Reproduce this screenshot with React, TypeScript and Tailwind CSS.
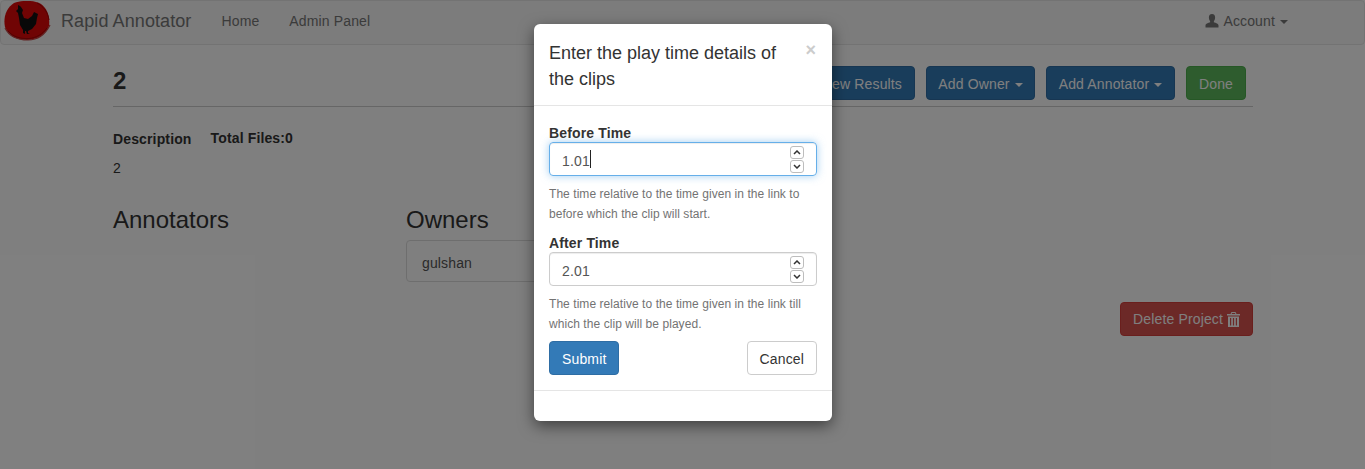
const sans = { fontFamily: '"Liberation Sans", Arial, sans-serif' }

function Caret() {
  return (
    <span className="ml-[5px] inline-block h-0 w-0 border-x-4 border-t-4 border-x-transparent border-t-current align-middle" />
  )
}

function Logo() {
  return (
    <svg width="50" height="42" viewBox="0 0 50 42" className="absolute left-0 top-0">
      <path
        d="M13 2 C21 -1 33 -1 40 3 C47 8 49 17 48 25 C45 34 35 39 26 39 C16 39 7 35 4 26 C2 17 5 7 13 2Z"
        fill="#e00808"
      />
      {/* brush marks round the rim */}
      <path d="M4 27 C8 35 17 39 27 39 C36 39 44 34 49 24" fill="none" stroke="#c04848" strokeWidth="1.2" />
      <path d="M7 30 C12 36 20 38 28 37.5 C35 37 42 33 46 27" fill="none" stroke="#a80404" strokeWidth="1" />
      <path d="M36 2 C42 5 47 11 48 19" fill="none" stroke="#a80404" strokeWidth="1" />
      <path
        d="M17 4 L19 5 L20 6 L22 9 L21 12 L23 17 L27 18 L31 15 L33 11 L37 13 L36 17 L35 23 L31 28 L27 30 L27 32 L29 33 L26 33 L25 30 L24 30 L24 33 L22 32 L22 29 L19 24 L18 17 L17 12 L15 10 L17 8Z"
        fill="#111"
      />
    </svg>
  )
}

function UserIcon() {
  return (
    <svg width="14" height="14" viewBox="0 0 14 14" fill="currentColor">
      <path d="M7 0 C9.2 0 10.2 1.7 10.1 3.7 C10 5.2 9.6 6.2 8.9 7.1 L8.9 8.2 C10.6 9 13.5 9.5 13.5 11.5 L13.5 13.6 L0.5 13.6 L0.5 11.5 C0.5 9.5 3.4 9 5.1 8.2 L5.1 7.1 C4.4 6.2 4 5.2 3.9 3.7 C3.8 1.7 4.8 0 7 0Z" />
    </svg>
  )
}

function TrashIcon() {
  return (
    <svg width="13" height="15" viewBox="0 0 13 15" fill="currentColor">
      <path d="M4.5 0 H8.5 L9.5 2 H13 V3.5 H0 V2 H3.5Z M5 1 L4.7 2 H8.3 L8 1Z" fillRule="evenodd" />
      <path
        d="M1 4.5 H12 V15 H1Z M3 6 V13.5 H4.2 V6Z M5.9 6 V13.5 H7.1 V6Z M8.8 6 V13.5 H10 V6Z"
        fillRule="evenodd"
      />
    </svg>
  )
}

function Spinner() {
  return (
    <div className="flex h-[27px] w-[14px] flex-col gap-px text-[#333]">
      <div className="flex h-[13px] items-center justify-center rounded-[3px] border border-[#bdbdbd] bg-white">
        <svg width="8" height="5" viewBox="0 0 8 5" fill="none" stroke="currentColor" strokeWidth="1.5">
          <path d="M1 4 L4 1 L7 4" />
        </svg>
      </div>
      <div className="flex h-[13px] items-center justify-center rounded-[3px] border border-[#bdbdbd] bg-white">
        <svg width="8" height="5" viewBox="0 0 8 5" fill="none" stroke="currentColor" strokeWidth="1.5">
          <path d="M1 1 L4 4 L7 1" />
        </svg>
      </div>
    </div>
  )
}

function TimeField({
  label,
  value,
  focused,
  help,
}: {
  label: string
  value: string
  focused?: boolean
  help: string[]
}) {
  return (
    <div>
      <div className="-mb-px h-5 text-sm font-bold leading-5 text-[#333]">{label}</div>
      <div
        className={
          focused
            ? 'flex h-[34px] items-center rounded border border-[#66afe9] pl-3 pr-[12px] text-sm text-[#555] shadow-[inset_0_1px_1px_rgba(0,0,0,0.075),0_0_8px_rgba(102,175,233,0.6)]'
            : 'flex h-[34px] items-center rounded border border-[#ccc] pl-3 pr-[12px] text-sm text-[#555] shadow-[inset_0_1px_1px_rgba(0,0,0,0.075)]'
        }
      >
        <span className="pt-[3px]">{value}</span>
        {focused && <span className="h-[18px] w-px bg-[#222]" />}
        <div className="ml-auto">
          <Spinner />
        </div>
      </div>
      <div className="mt-2 text-xs leading-5 tracking-[0.06px] text-[#737373]">
        {help.map((line) => (
          <div key={line}>{line}</div>
        ))}
      </div>
    </div>
  )
}

export default function App() {
  return (
    <div
      className="relative h-[469px] w-full overflow-hidden bg-white text-sm tracking-[0.01em] text-[#333]"
      style={sans}
    >
      <nav className="relative flex h-[45px] items-center rounded border border-[#e7e7e7] bg-[#f8f8f8] pb-1">
        <Logo />
        <span className="ml-[60px] text-lg tracking-[0.005em] text-[#777]">Rapid Annotator</span>
        <a className="ml-[30px] text-[#777]">Home</a>
        <a className="ml-[30px] text-[#777]">Admin Panel</a>
        <span className="ml-auto mr-[76px] flex items-center gap-1 text-[#777]">
          <UserIcon />
          <span>
            Account
            <Caret />
          </span>
        </span>
      </nav>

      <main className="ml-[113px] w-[1140px]">
        <div className="mt-[21px] flex h-[41px] items-start justify-between border-b border-[#ccc] pr-[7px]">
          <h3 className="text-2xl font-bold leading-[30px] tracking-normal text-[#333]">2</h3>
          <div className="flex gap-[11px]">
            <button className="h-[34px] rounded border border-[#2e6da4] bg-[#337ab7] px-3 pt-px text-white">
              View Results
            </button>
            <button className="h-[34px] w-[109px] rounded border border-[#2e6da4] bg-[#337ab7] pt-px text-white">
              Add Owner
              <Caret />
            </button>
            <button className="h-[34px] w-[129px] rounded border border-[#2e6da4] bg-[#337ab7] pt-px text-white">
              Add Annotator
              <Caret />
            </button>
            <button className="h-[34px] w-[60px] rounded border border-[#4cae4c] bg-[#5cb85c] pt-px text-white">
              Done
            </button>
          </div>
        </div>

        <div className="mt-[21px] flex h-5 items-center gap-[19px] font-bold">
          <span className="translate-y-px">Description</span>
          <span className="tracking-[0.01em]">Total Files:0</span>
        </div>
        <p className="mt-[10px] leading-5">2</p>

        <div className="mt-[27px] flex">
          <div className="w-[293px]">
            <h3 className="text-2xl leading-[30px] tracking-normal">Annotators</h3>
          </div>
          <div className="w-[293px]">
            <h3 className="text-2xl leading-[30px] tracking-normal">Owners</h3>
            <div className="mt-[5px] h-[42px] rounded border border-[#ddd] bg-white px-[15px] pt-px leading-[42px] text-[#555]">
              gulshan
            </div>
          </div>
        </div>

        <div className="mt-5 flex justify-end">
          <button className="flex h-[34px] items-center gap-1 rounded border border-[#d43f3a] bg-[#d9534f] px-3 text-white">
            Delete Project
            <TrashIcon />
          </button>
        </div>
      </main>

      <div className="absolute inset-0 bg-black/50" />

      <div className="absolute left-[534px] top-6 w-[298px] rounded-md bg-white shadow-[0_5px_15px_rgba(0,0,0,0.5)]">
        <div className="relative h-[82px] border-b border-[#e5e5e5] pl-[15px] pr-[40px] pt-4 text-lg leading-[26px] tracking-normal text-[#333]">
          Enter the play time details of the clips
          <span className="absolute right-[16px] top-4 text-[18px] font-bold leading-[21px] text-[#ccc]">×</span>
        </div>
        <div className="flex flex-col px-[15px] pt-[17px]">
          <div className="mb-[9px]">
            <TimeField
              label="Before Time"
              value="1.01"
              focused
              help={['The time relative to the time given in the link to', 'before which the clip will start.']}
            />
          </div>
          <TimeField
            label="After Time"
            value="2.01"
            help={['The time relative to the time given in the link till', 'which the clip will be played.']}
          />
          <div className="mt-[7px] flex justify-between">
            <button className="h-[34px] rounded border border-[#2e6da4] bg-[#337ab7] px-3 pt-[2px] text-white">
              Submit
            </button>
            <button className="h-[34px] rounded border border-[#ccc] bg-white px-3 pt-[2px] text-[#333]">
              Cancel
            </button>
          </div>
        </div>
        <div className="mt-[15px] h-[31px] border-t border-[#e5e5e5]" />
      </div>
    </div>
  )
}
